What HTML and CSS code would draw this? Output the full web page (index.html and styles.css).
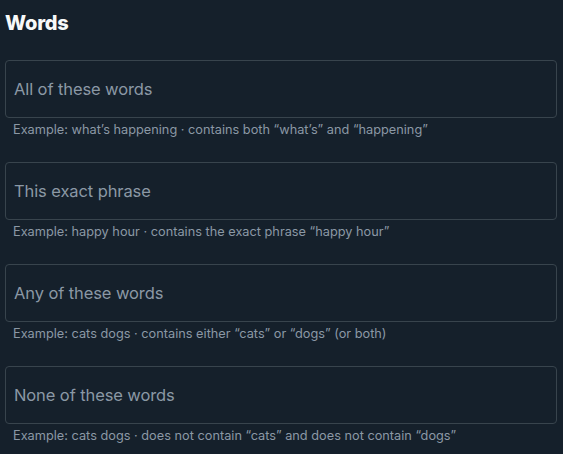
FILE: index.html
```html
<!DOCTYPE html>
<html>
<head>
<meta charset="utf-8">
<link rel="stylesheet" href="styles.css">
</head>
<body>
<div class="page">
  <h2 class="title">Words</h2>
  <div class="field">
    <div class="box"><span class="placeholder">All of these words</span></div>
    <div class="hint">Example: what’s happening · contains both “what’s” and “happening”</div>
  </div>
  <div class="field">
    <div class="box"><span class="placeholder">This exact phrase</span></div>
    <div class="hint">Example: happy hour · contains the exact phrase “happy hour”</div>
  </div>
  <div class="field">
    <div class="box"><span class="placeholder">Any of these words</span></div>
    <div class="hint">Example: cats dogs · contains either “cats” or “dogs” (or both)</div>
  </div>
  <div class="field">
    <div class="box"><span class="placeholder">None of these words</span></div>
    <div class="hint">Example: cats dogs · does not contain “cats” and does not contain “dogs”</div>
  </div>
</div>
</body>
</html>
```
FILE: styles.css
```css
html, body {
  margin: 0;
  padding: 0;
  background: #15202b;
  font-family: Inter, "Noto Sans", sans-serif;
}
.page {
  padding: 11px 6px 0 5px;
  display: flex;
  flex-direction: column;
}
.title {
  margin: 0;
  font-size: 20px;
  font-weight: 800;
  color: #f7f9f9;
  line-height: 24px;
  height: 49px;
  letter-spacing: -0.2px;
}
.field {
  display: flex;
  flex-direction: column;
  height: 102px;
}
.box {
  height: 56px;
  border: 1px solid #38444d;
  border-radius: 4px;
  display: flex;
  align-items: center;
  padding: 0 8px;
}
.placeholder {
  font-size: 16.5px;
  color: #8b98a5;
  letter-spacing: -0.1px;
}
.hint {
  margin-top: 4px;
  padding-left: 8px;
  font-size: 12.75px;
  line-height: 16px;
  color: #8b98a5;
}
```
